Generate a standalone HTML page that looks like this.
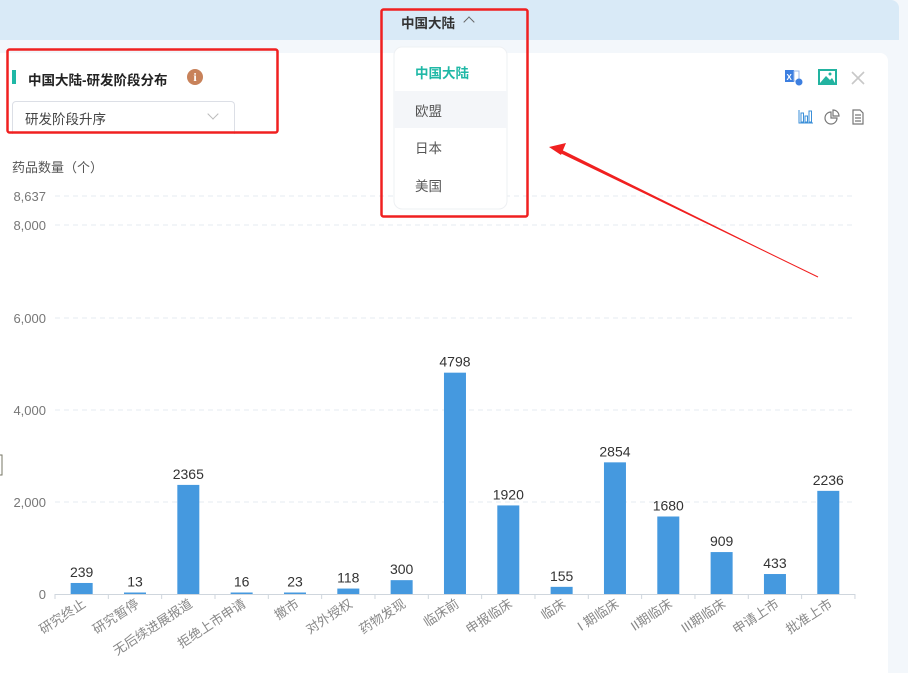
<!DOCTYPE html>
<html><head><meta charset="utf-8"><style>
body{margin:0;width:908px;height:662px;overflow:hidden;background:#f3f7fb;font-family:"Liberation Sans","Noto Sans CJK SC",sans-serif;position:relative}
.hdr{position:absolute;left:0;top:0;width:899px;height:40px;background:#d9eaf7;border-radius:0 8px 0 0}
.card{position:absolute;left:0;top:53px;width:888px;height:620px;background:#fff;border-radius:0 8px 0 0}
.abs{position:absolute}
</style></head><body>
<div class="hdr"></div>
<div class="card"></div>
<div class="abs" style="left:401px;top:12px;font-size:13.5px;font-weight:bold;color:#333">中国大陆</div>
<div class="abs" style="left:465px;top:18px;width:7px;height:7px;border-left:1px solid #666;border-top:1px solid #666;transform:rotate(45deg)"></div>
<div class="abs" style="left:12px;top:70px;width:4px;height:14px;background:#1fb8a6"></div>
<div class="abs" style="left:28px;top:69px;font-size:13.5px;font-weight:bold;color:#222">中国大陆-研发阶段分布</div>
<div class="abs" style="left:187px;top:69px;width:16px;height:16px;border-radius:50%;background:#c8825a;color:#fff;font-size:12px;font-weight:bold;text-align:center;line-height:16px;font-family:'Liberation Serif',serif">i</div>
<div class="abs" style="left:12px;top:101px;width:221px;height:32px;border:1px solid #dcdfe6;border-bottom:none;border-radius:4px 4px 0 0"></div>
<div class="abs" style="left:25px;top:108px;font-size:13.5px;color:#444">研发阶段升序</div>
<div class="abs" style="left:209px;top:110px;width:7px;height:7px;border-right:1px solid #bbb;border-bottom:1px solid #bbb;transform:rotate(45deg)"></div>
<div class="abs" style="left:12px;top:157px;font-size:13px;color:#555">药品数量（个）</div>
<svg class="abs" style="left:0;top:0" width="908" height="662">
<g font-family="Liberation Sans,Noto Sans CJK SC,sans-serif">
<g stroke="#e6ebf0" stroke-dasharray="5,4"><line x1="55" x2="855" y1="196" y2="196"/><line x1="55" x2="855" y1="225" y2="225"/><line x1="55" x2="855" y1="318" y2="318"/><line x1="55" x2="855" y1="410" y2="410"/><line x1="55" x2="855" y1="502" y2="502"/></g>
<g font-size="13" fill="#777" text-anchor="end"><text x="46" y="201">8,637</text><text x="46" y="230">8,000</text><text x="46" y="323">6,000</text><text x="46" y="415">4,000</text><text x="46" y="507">2,000</text><text x="46" y="599">0</text></g>
<line x1="55" x2="855" y1="594.5" y2="594.5" stroke="#cfd6dd"/>
<g stroke="#cfd6dd" id="ticks"></g>
<g id="bars"></g>
</g>
<line x1="818" y1="277" x2="552" y2="148" stroke="#f02020" stroke-width="1"/>
<polygon points="549,147 566,143 561,155" fill="#f02020"/>
<path d="M818 277 L562 150 L560 153 Z" fill="#f02020"/>
<rect x="785" y="70" width="9" height="12" fill="#3d7fe0"/><text x="786.5" y="80" font-size="8" fill="#fff" font-weight="bold" font-family="Liberation Sans">X</text>
<rect x="794" y="71" width="5" height="10" fill="none" stroke="#9db9e8"/><circle cx="799" cy="82" r="3.5" fill="#3d7fe0"/>
<rect x="819" y="70" width="17" height="14" fill="none" stroke="#22b3a0" stroke-width="2"/><path d="M820 83 L826 76 L830 80 L832 78 L835 83Z" fill="#22b3a0"/><circle cx="830" cy="74" r="1.5" fill="#22b3a0"/>
<path d="M852 72 L864 84 M864 72 L852 84" stroke="#c8c8c8" stroke-width="1.6"/>
<path d="M799 110 v13 h14" stroke="#3b8fd8" fill="none"/><rect x="801" y="113" width="2.5" height="9" fill="none" stroke="#3b8fd8"/><rect x="805" y="116" width="2.5" height="6" fill="none" stroke="#3b8fd8"/><rect x="809" y="111" width="2.5" height="11" fill="none" stroke="#3b8fd8"/>
<path d="M831 112 A6 6 0 1 0 837 118 L831 118 Z M833 110 A6 6 0 0 1 839 116 L833 116 Z" fill="none" stroke="#777" stroke-width="1.2"/>
<path d="M853 110 h7 l3 3 v11 h-10 Z M855 115 h6 M855 118 h6 M855 121 h6" fill="none" stroke="#777" stroke-width="1.2"/>
<rect x="394" y="47" width="113" height="162" rx="8" fill="#fff" stroke="#eef0f3"/>
<rect x="394" y="91" width="113" height="37" fill="#f4f6f9"/>
<g font-size="13.5" font-family="Liberation Sans,Noto Sans CJK SC,sans-serif"><text x="415" y="78" fill="#1fb8a6" font-weight="bold">中国大陆</text><text x="415" y="116" fill="#555">欧盟</text><text x="415" y="153" fill="#555">日本</text><text x="415" y="191" fill="#555">美国</text></g>
<rect x="7.5" y="49.5" width="270" height="83" rx="2" fill="none" stroke="#f02020" stroke-width="2.5"/>
<rect x="381.5" y="9.5" width="146" height="207" rx="2" fill="none" stroke="#f02020" stroke-width="2.5"/>
<rect x="-1" y="455" width="3" height="20" fill="none" stroke="#776"/>
</svg>
<script>
var d=[["研究终止",239],["研究暂停",13],["无后续进展报道",2365],["拒绝上市申请",16],["撤市",23],["对外授权",118],["药物发现",300],["临床前",4798],["申报临床",1920],["临床",155],["I 期临床",2854],["II期临床",1680],["III期临床",909],["申请上市",433],["批准上市",2236]];
var ns="http://www.w3.org/2000/svg",b=document.getElementById("bars"),t=document.getElementById("ticks");
function el(n,a,p,tx){var e=document.createElementNS(ns,n);for(var k in a)e.setAttribute(k,a[k]);if(tx)e.textContent=tx;p.appendChild(e);return e;}
for(var i=0;i<=15;i++){var x=55+i*53.33;el("line",{x1:x,x2:x,y1:594,y2:599},t);}
d.forEach(function(v,i){var c=55+53.33*(i+0.5),h=Math.max(v[1]*0.04613,1.5);
el("rect",{x:c-11,y:594-h,width:22,height:h,fill:"#4599df"},b);
el("text",{x:c,y:594-h-6,"text-anchor":"middle","font-size":"14",fill:"#333"},b,v[1]);
el("text",{x:c+5,y:606,"text-anchor":"end","font-size":"13",fill:"#888",transform:"rotate(-33 "+(c+5)+" 606)"},b,v[0]);});
</script>
</body></html>
